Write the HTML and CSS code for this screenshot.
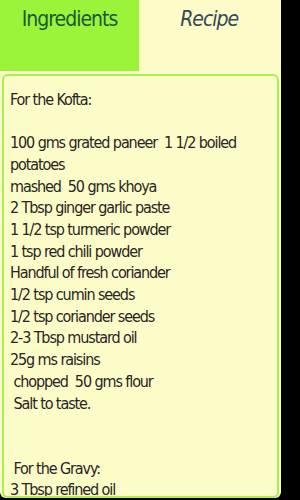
FILE: index.html
```html
<!DOCTYPE html>
<html lang="en">
<head>
  <meta charset="UTF-8" />
  <meta name="viewport" content="width=device-width, initial-scale=1.0"/>
  <title>Malai Kofta</title>
  <link rel="stylesheet" href="styles.css">
</head>
<body>

  <div class="pantalla">
    <!-- pestañas -->
    <div class="pestanas">
      <div class="pestana activa">Ingredients</div>
      <div class="pestana">Recipe</div>
    </div>

    <!-- ingredientes -->
    <div class="panel">
      <div class="texto">For the Kofta:

100 gms grated paneer  1 1/2 boiled potatoes
mashed  50 gms khoya
2 Tbsp ginger garlic paste
1 1/2 tsp turmeric powder
1 tsp red chili powder
Handful of fresh coriander
1/2 tsp cumin seeds
1/2 tsp coriander seeds
2-3 Tbsp mustard oil
25g ms raisins
 chopped  50 gms flour
 Salt to taste.


 For the Gravy:
3 Tbsp refined oil</div>
    </div>
  </div>

</body>
</html>
```

FILE: styles.css
```css
* { margin: 0; padding: 0; box-sizing: border-box; }

body {
  background: #000;
  width: 300px;
  height: 500px;
  overflow: hidden;
}

.pantalla {
  width: 281px;
  height: 498px;
  background: #fcfcc9;
  border-radius: 0 0 6px 6px;
  overflow: hidden;
  display: flex;
  flex-direction: column;
}

.pestanas {
  display: flex;
  height: 74px;
}

.pestana {
  width: 50%;
  text-align: center;
  padding-top: 7px;
  font-family: "DejaVu Sans Condensed", sans-serif;
  font-size: 21px;
  letter-spacing: -1px;
  font-style: italic;
  color: #34495a;
  background: #fdfcc8;
}

.pestana.activa {
  width: 139px;
  background: #9cf43a;
  color: #175a36;
  font-style: normal;
}

.panel {
  flex-grow: 1;
  margin: 3px 2px 0 2px;
  background: #fbfcc8;
  border: 2px solid #a8ef55;
  border-radius: 6px;
  overflow: hidden;
  padding: 13px 6px;
}

.texto {
  white-space: pre-wrap;
  font-family: "DejaVu Sans Condensed", sans-serif;
  font-size: 16px;
  letter-spacing: -1.1px;
  line-height: 21.7px;
  color: #2a2424;
}
```
